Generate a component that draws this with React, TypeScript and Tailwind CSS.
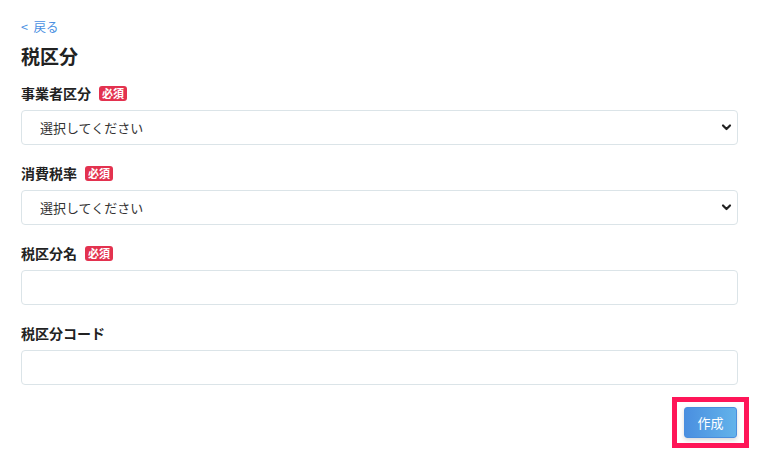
import type { ReactNode } from "react";

function Badge() {
  return (
    <span className="ml-[8px] inline-flex h-[15px] items-center rounded-[3px] bg-[#e3324f] px-[3px] text-[11px] font-bold leading-none text-white">
      必須
    </span>
  );
}

function Field({ label, required, first, children }: { label: string; required?: boolean; first?: boolean; children: ReactNode }) {
  return (
    <div className={first ? "mt-[14px]" : "mt-[18px]"}>
      <div className="mb-[7px] flex h-[20px] items-center text-[14px] font-bold text-[#222]">
        <span>{label}</span>
        {required && <Badge />}
      </div>
      {children}
    </div>
  );
}

function Select() {
  return (
    <div className="relative">
      <select className="h-[35px] w-full appearance-none rounded-[4px] border border-[#dbe4e8] bg-white pl-[18px] text-[13px] text-[#333] outline-none">
        <option>選択してください</option>
      </select>
      <svg
        className="pointer-events-none absolute right-[6px] top-[13px]"
        width="11"
        height="9"
        viewBox="0 0 11 9"
        fill="none"
      >
        <path d="M2 2.5 L5.5 6 L9 2.5" stroke="#222" strokeWidth="2.2" strokeLinecap="round" strokeLinejoin="round" />
      </svg>
    </div>
  );
}

function Input() {
  return <input className="block h-[35px] w-full rounded-[4px] border border-[#dbe4e8] bg-white px-3 text-[13px] outline-none" />;
}

export default function App() {
  return (
    <div className="min-h-[454px] w-[758px] bg-white pl-[21px] pr-[20px] pt-[18px] font-['Noto_Sans_CJK_JP','Noto_Sans',sans-serif]">
      <a className="block h-[18px] text-[12.5px] leading-[18px] text-[#4a90e2]">&lt;&nbsp; 戻る</a>
      <h1 className="mt-[7px] h-[26px] text-[19px] font-bold leading-[26px] text-[#222]">税区分</h1>

      <Field label="事業者区分" required first>
        <Select />
      </Field>
      <Field label="消費税率" required>
        <Select />
      </Field>
      <Field label="税区分名" required>
        <Input />
      </Field>
      <Field label="税区分コード">
        <Input />
      </Field>

      <div className="mr-[-11px] mt-[12px] flex justify-end">
        <div className="border-[5px] border-[#ff1658] px-[7px] py-[5px]">
          <button className="h-[31px] w-[53px] rounded-[3px] border border-[#4a8ede] bg-gradient-to-r from-[#4a8fe0] to-[#63b3ea] text-[13px] font-normal text-white shadow-[0_2px_4px_rgba(0,0,0,0.15)]">
            作成
          </button>
        </div>
      </div>
    </div>
  );
}
